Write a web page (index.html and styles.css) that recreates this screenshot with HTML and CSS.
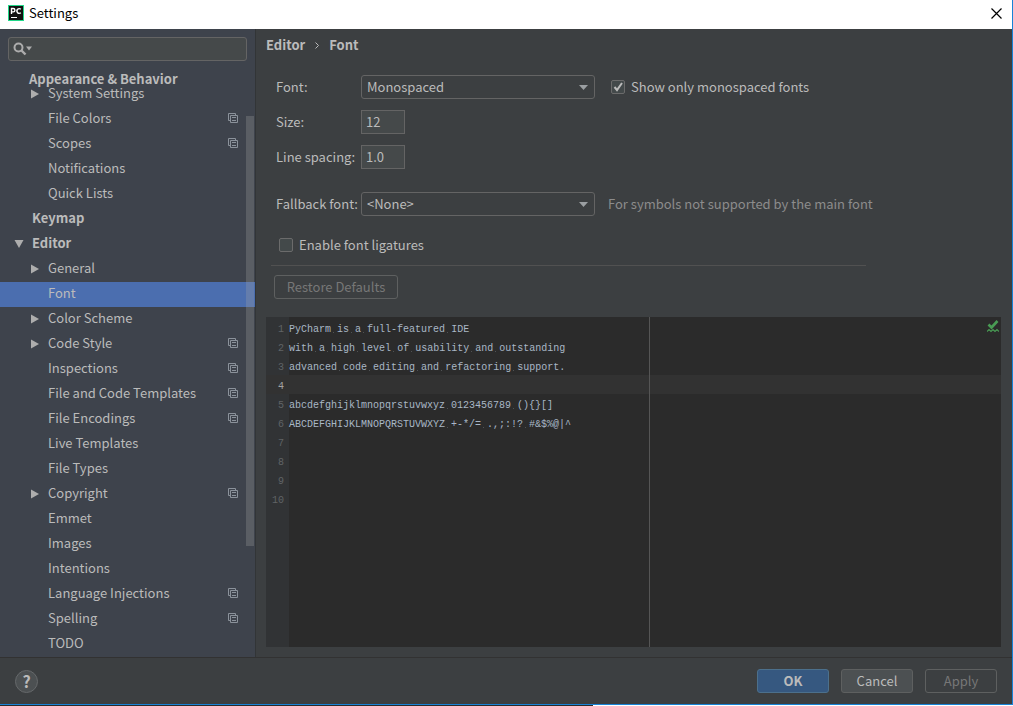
FILE: index.html
```html
<!DOCTYPE html>
<html lang="en">
<head>
<meta charset="utf-8">
<title>Settings</title>
<link rel="stylesheet" href="styles.css">
</head>
<body>
<svg class="defs" width="0" height="0" aria-hidden="true">
  <symbol id="right" viewBox="0 0 10 10"><path d="M1 0.5 9 5 1 9.5z" fill="#adadad"/></symbol>
  <symbol id="down" viewBox="0 0 10 10"><path d="M0.5 1h9L5 9z" fill="#adadad"/></symbol>
  <symbol id="copy" viewBox="0 0 10 10"><path d="M2.5 7.5h-2v-7h7v2M2.5 2.5h7v7h-7zM4 4.5h4M4 7.5h4" fill="none" stroke="#8b929b"/></symbol>
  <symbol id="arrow" viewBox="0 0 9 5"><path d="M0 0h9L4.5 5z" fill="#9b9fa2"/></symbol>
</svg>
<div class="window">
  <header class="titlebar">
    <svg class="logo" width="16" height="16" viewBox="0 0 16 16">
      <path d="M0 0h16v16H0z" fill="#21d789"/><path d="M1 1h14v14H1z" fill="#111"/>
      <path d="M3.500 9V3.500h1.700a1.700 1.700 0 0 1 0 3.400H3.500M12.800 4.200a2.300 2.400 0 1 0 0 3.600" fill="none" stroke="#fff" stroke-width="1.400"/>
      <path d="M3 12h6v1H3z" fill="#fff"/>
    </svg>
    <h1>Settings</h1>
    <button class="close" aria-label="Close"><svg width="11" height="11" viewBox="0 0 11 11"><path d="M.5.5l10 10M10.500.5l-10 10" stroke="#000" stroke-width="1.200"/></svg></button>
  </header>
  <div class="body">
    <aside class="sidebar">
      <label class="search">
        <svg width="20" height="14" viewBox="0 0 20 14"><circle cx="5.500" cy="5.500" r="4" fill="none" stroke="#adadad" stroke-width="2"/><path d="M8.500 8.500l4 4" stroke="#adadad" stroke-width="2.400"/><path d="M13 4.500h6l-3 4z" fill="#adadad"/></svg>
        <input type="text" aria-label="Search settings">
      </label>
      <div class="group">Appearance &amp; Behavior</div>
      <div class="scroll">
        <ul class="tree">
          <li class="row"><svg class="tw"><use href="#right"/></svg><span>System Settings</span></li>
          <li class="row"><span>File Colors</span><svg class="cp"><use href="#copy"/></svg></li>
          <li class="row"><span>Scopes</span><svg class="cp"><use href="#copy"/></svg></li>
          <li class="row"><span>Notifications</span></li>
          <li class="row"><span>Quick Lists</span></li>
          <li class="row top"><span>Keymap</span></li>
          <li class="row top"><svg class="tw"><use href="#down"/></svg><span>Editor</span></li>
          <li class="row"><svg class="tw"><use href="#right"/></svg><span>General</span></li>
          <li class="row selected"><span>Font</span></li>
          <li class="row"><svg class="tw"><use href="#right"/></svg><span>Color Scheme</span></li>
          <li class="row"><svg class="tw"><use href="#right"/></svg><span>Code Style</span><svg class="cp"><use href="#copy"/></svg></li>
          <li class="row"><span>Inspections</span><svg class="cp"><use href="#copy"/></svg></li>
          <li class="row"><span>File and Code Templates</span><svg class="cp"><use href="#copy"/></svg></li>
          <li class="row"><span>File Encodings</span><svg class="cp"><use href="#copy"/></svg></li>
          <li class="row"><span>Live Templates</span></li>
          <li class="row"><span>File Types</span></li>
          <li class="row"><svg class="tw"><use href="#right"/></svg><span>Copyright</span><svg class="cp"><use href="#copy"/></svg></li>
          <li class="row"><span>Emmet</span></li>
          <li class="row"><span>Images</span></li>
          <li class="row"><span>Intentions</span></li>
          <li class="row"><span>Language Injections</span><svg class="cp"><use href="#copy"/></svg></li>
          <li class="row"><span>Spelling</span><svg class="cp"><use href="#copy"/></svg></li>
          <li class="row"><span>TODO</span></li>
        </ul>
        <div class="thumb"></div>
      </div>
    </aside>
    <main class="main">
      <nav class="crumbs"><span>Editor</span><svg width="4" height="7" viewBox="0 0 4 7"><path d="M.5.5l3 3-3 3" fill="none" stroke="#bbb"/></svg><span>Font</span></nav>
      <form class="form">
        <label for="font">Font:</label>
        <div class="combo"><select id="font"><option>Monospaced</option></select><svg width="9" height="5"><use href="#arrow"/></svg></div>
        <label class="check"><input type="checkbox" checked><span>Show only monospaced fonts</span></label>
        <label for="size">Size:</label>
        <input class="num" id="size" type="text" value="12">
        <label for="spacing">Line spacing:</label>
        <input class="num" id="spacing" type="text" value="1.0">
        <label class="late" for="fallback">Fallback font:</label>
        <div class="combo late"><select id="fallback"><option>&lt;None&gt;</option></select><svg width="9" height="5"><use href="#arrow"/></svg></div>
        <span class="hint late">For symbols not supported by the main font</span>
      </form>
      <div class="extras">
        <label class="check"><input type="checkbox"><span>Enable font ligatures</span></label>
        <hr>
        <button class="btn restore" disabled>Restore Defaults</button>
      </div>
      <div class="editor">
        <div class="line"><span class="no">1</span><code>PyCharm<i> </i>is<i> </i>a<i> </i>full-featured<i> </i>IDE</code></div>
        <div class="line"><span class="no">2</span><code>with<i> </i>a<i> </i>high<i> </i>level<i> </i>of<i> </i>usability<i> </i>and<i> </i>outstanding</code></div>
        <div class="line"><span class="no">3</span><code>advanced<i> </i>code<i> </i>editing<i> </i>and<i> </i>refactoring<i> </i>support.</code></div>
        <div class="line current"><span class="no">4</span><code></code></div>
        <div class="line"><span class="no">5</span><code>abcdefghijklmnopqrstuvwxyz<i> </i>0123456789<i> </i>(){}[]</code></div>
        <div class="line"><span class="no">6</span><code>ABCDEFGHIJKLMNOPQRSTUVWXYZ<i> </i>+-*/=<i> </i>.,;:!?<i> </i>#&amp;$%@|^</code></div>
        <div class="line"><span class="no">7</span><code></code></div>
        <div class="line"><span class="no">8</span><code></code></div>
        <div class="line"><span class="no">9</span><code></code></div>
        <div class="line"><span class="no">10</span><code></code></div>
        <svg class="ok" width="12" height="13" viewBox="0 0 12 13"><path d="M1.500 4.500l3 3L10.500 1" fill="none" stroke="#499c54" stroke-width="2.600"/><path d="M0 11.500l2-2 2 2 2-2 2 2 2-2 2 2" fill="none" stroke="#499c54" stroke-width="1.200"/></svg>
      </div>
    </main>
  </div>
  <footer class="footer">
    <button class="help" aria-label="Help">?</button>
    <button class="btn primary">OK</button>
    <button class="btn">Cancel</button>
    <button class="btn" disabled>Apply</button>
  </footer>
</div>
<div class="under"></div>
</body>
</html>
```
FILE: styles.css
```css
* { box-sizing: border-box; }
body {
  margin: 0;
  height: 100vh;
  display: flex;
  flex-direction: column;
  background: #fff;
  color: #bbb;
  font: 13px/20px "Noto Sans CJK SC", sans-serif;
}
button, input, select { font: inherit; color: inherit; margin: 0; }
svg { display: block; flex: none; }
.defs { position: absolute; }
.window {
  flex: 1;
  min-height: 0;
  display: flex;
  flex-direction: column;
  background: #3c3f41;
  border: solid #1883d7;
  border-width: 0 1px 1px 0;
}
.under { height: 1px; width: 593px; background: #2b2b2b; }
.titlebar {
  height: 29px;
  padding: 0 10px 3px 8px;
  display: flex;
  align-items: center;
  gap: 5px;
  background: #fff;
  color: #000;
}
.titlebar h1 { flex: 1; margin: 0; font-size: 13px; font-weight: 400; }
.close { border: 0; padding: 0; background: none; }
.body { flex: 1; min-height: 0; display: flex; }

.sidebar {
  width: 256px;
  flex: none;
  display: flex;
  flex-direction: column;
  background: #3e434c;
  border-right: 1px solid #323537;
}
.search {
  margin: 8px 8px 0;
  height: 24px;
  padding: 0 4px;
  display: flex;
  align-items: center;
  background: #45494a;
  border: 1px solid #646464;
  border-radius: 3px;
}
.search input { flex: 1; min-width: 0; border: 0; background: none; outline: 0; }
.group { padding: 11px 0 0 29px; line-height: 14px; margin-bottom: -4px; font-weight: 700; }
.scroll { flex: 1; min-height: 0; overflow: hidden; position: relative; }
.tree { list-style: none; margin: 0; padding: 0; line-height: 14px; }
.row {
  position: relative;
  height: 25px;
  padding: 0 17px 3px 48px;
  display: flex;
  align-items: center;
}
.row span { flex: 1; }
.row.top { padding-left: 32px; font-weight: 700; }
.tw { position: absolute; left: 30px; top: 7px; width: 10px; height: 10px; }
.top .tw { left: 14px; }
.cp { width: 10px; height: 10px; }
.selected { background: #4b6eaf; }
.thumb {
  position: absolute;
  right: 1px;
  top: 34px;
  width: 8px;
  height: 430px;
  background: rgba(166, 166, 166, .28);
}

.main { flex: 1; min-width: 0; display: flex; flex-direction: column; padding: 6px 11px 10px 10px; }
.crumbs { display: flex; align-items: center; gap: 10px; font-weight: 700; }
.form {
  margin-top: 20px;
  padding-left: 10px;
  display: grid;
  grid-template-columns: 85px 234px 1fr;
  grid-auto-rows: 24px;
  row-gap: 11px;
  align-items: center;
}
.form label { white-space: nowrap; }
.form > label { grid-column: 1; }
.form > .check { grid-column: 3; margin-left: 16px; }
.late { margin-top: 24px; }
.combo { display: grid; align-items: center; }
.combo > * { grid-area: 1 / 1; }
.combo svg { justify-self: end; margin-right: 7px; pointer-events: none; }
.combo select {
  appearance: none;
  width: 100%;
  height: 24px;
  padding: 0 5px;
  background: #3c3f41;
  border: 1px solid #646464;
  border-radius: 3px;
}
.num { width: 44px; height: 24px; padding: 0 4px 2px; background: #45494a; border: 1px solid #646464; }
.hint { margin-left: 13px; color: #8c8c8c; white-space: nowrap; }
.check { display: flex; align-items: center; gap: 6px; }
.check input {
  appearance: none;
  width: 14px;
  height: 14px;
  background: #43494a;
  border: 1px solid #6b6b6b;
  border-radius: 2px;
}
.check input:checked {
  background: #43494a url("data:image/svg+xml,%3Csvg xmlns='http://www.w3.org/2000/svg' viewBox='0 0 12 12'%3E%3Cpath d='M2.500 6l2.500 3L10 2' fill='none' stroke='%23bbb' stroke-width='2'/%3E%3C/svg%3E");
}
.extras { margin-top: 31px; padding-left: 5px; }
.extras .check { margin-left: 8px; }
hr { width: 595px; max-width: 100%; margin: 10px 0 9px; border: 0; border-top: 1px solid #515151; }
.btn {
  height: 24px;
  width: 72px;
  padding: 0;
  background: #4c5052;
  border: 1px solid #5e6060;
  border-radius: 3px;
}
.btn:disabled { background: none; color: #777; }
.restore { display: block; width: 124px; margin-left: 3px; }
.primary { background: #365880; border-color: #4c708c; font-weight: 700; }

.editor {
  position: relative;
  flex: 1;
  min-height: 0;
  margin-top: 18px;
  padding-top: 1px;
  background:
    linear-gradient(#555, #555) 383px 0 / 1px 100% no-repeat,
    linear-gradient(90deg, #313335 23px, #2b2b2b 23px);
  color: #a9b7c6;
  font: 10px/19px "Liberation Mono", monospace;
}
.line { display: flex; height: 19px; padding-top: 2px; white-space: pre; }
.no { width: 23px; padding-right: 5px; text-align: right; color: #606366; }
.line code { font: inherit; }
.line i { background: linear-gradient(#505355, #505355) 2px 8px / 1px 1px no-repeat; }
.current { background: linear-gradient(#555, #555) 383px 0 / 1px 100% no-repeat, #323232; }
.current .no { color: #a4a3a3; }
.ok { position: absolute; right: 2px; top: 3px; }

.footer {
  height: 47px;
  padding: 0 15px;
  display: flex;
  align-items: center;
  gap: 12px;
  border-top: 1px solid #323232;
}
.help {
  width: 23px;
  height: 23px;
  margin-right: auto;
  padding: 0;
  border: 1px solid #65686a;
  border-radius: 50%;
  background: #4c5052;
  font-size: 16px;
  font-weight: 700;
  line-height: 20px;
}
```
